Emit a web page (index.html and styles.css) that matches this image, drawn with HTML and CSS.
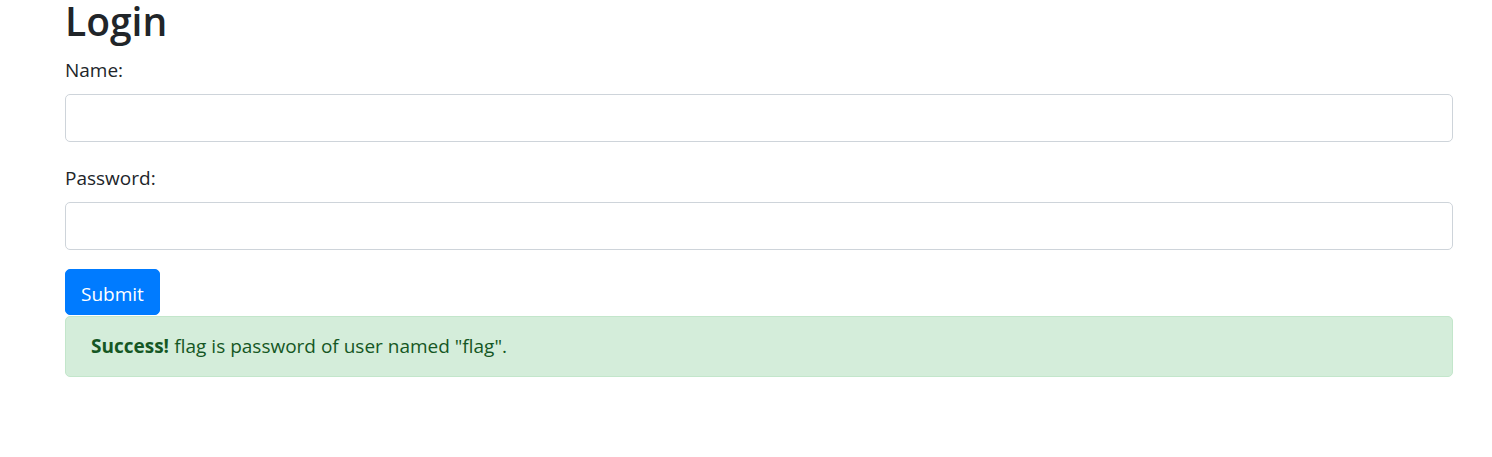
FILE: index.html
```html
<!DOCTYPE html>
<html>
<head>
<meta charset="utf-8">
<link rel="stylesheet" href="styles.css">
</head>
<body>
<div class="container">
  <h1 class="title">Login</h1>
  <form class="form">
    <div class="group">
      <label class="label" for="name">Name:</label>
      <input class="control" id="name" type="text">
    </div>
    <div class="group">
      <label class="label" for="pwd">Password:</label>
      <input class="control" id="pwd" type="password">
    </div>
    <button class="btn" type="button">Submit</button>
  </form>
  <div class="alert"><strong>Success!</strong> flag is password of user named "flag".</div>
</div>
</body>
</html>
```
FILE: styles.css
```css
html, body {
  margin: 0;
  padding: 0;
  background: #fff;
}
body {
  font-family: "Open Sans", "Noto Sans", "Liberation Sans", sans-serif;
  font-size: 19px;
  line-height: 1.5;
  color: #212529;
}
.container {
  padding: 0 39px 0 65px;
}
.title {
  margin: 0;
  padding-top: 1px;
  font-size: 39px;
  font-weight: 600;
  line-height: 40px;
}
.form {
  margin: 15px 0 0;
}
.group {
  display: flex;
  flex-direction: column;
  margin-bottom: 22px;
}
.group + .group {
  margin-bottom: 19px;
}
.label {
  line-height: 28px;
  margin-bottom: 10px;
}
.control {
  box-sizing: border-box;
  height: 48px;
  border: 1px solid #ced4da;
  border-radius: 5px;
  padding: 6px 15px;
  font: inherit;
  background: #fff;
}
.btn {
  display: block;
  box-sizing: border-box;
  height: 46px;
  padding: 4px 15px 0;
  background: #007bff;
  color: #fff;
  border: 1px solid #007bff;
  border-radius: 5px;
  font: inherit;
}
.alert {
  box-sizing: border-box;
  height: 61px;
  margin-top: 1px;
  display: flex;
  align-items: center;
  padding: 0 25px;
  background: #d4edda;
  border: 1px solid #c3e6cb;
  border-radius: 5px;
  color: #155724;
}
.alert strong {
  font-weight: 700;
  margin-right: 0.28em;
}
```
